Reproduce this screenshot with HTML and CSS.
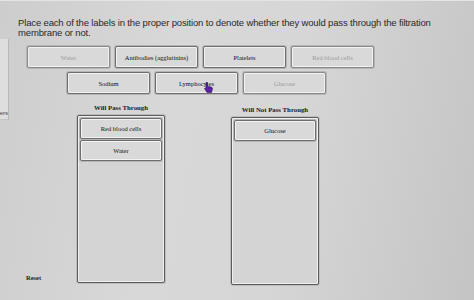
FILE: index.html
```html
<!DOCTYPE html>
<html lang="en">

<head>
    <meta charset="UTF-8">
    <meta name="viewport" content="width=device-width, initial-scale=1.0">
    <title>Filtration Membrane</title>
    <link rel="stylesheet" href="styles.css">
</head>

<body>
    <div class="frame">
        <!-- Side tab, mostly cut off -->
        <div class="side"><span>ers</span></div>

        <div class="content">
            <p class="prompt">Place each of the labels in the proper position to denote whether they would pass through the filtration membrane or not.</p>

            <!-- Label bank -->
            <div class="bank">
                <div class="row row-top">
                    <div class="label used">Water</div>
                    <div class="label">Antibodies (agglutinins)</div>
                    <div class="label">Platelets</div>
                    <div class="label used">Red blood cells</div>
                </div>
                <div class="row row-bottom">
                    <div class="label">Sodium</div>
                    <div class="label cursor-host">Lymphocytes
                        <svg class="cursor" width="9" height="11" viewBox="0 0 9 11">
                            <path d="M2 0.5 L3.5 0.5 L3.5 4.5 L7.5 5 L8.5 6.5 L7.5 10.5 L3 10.5 L0.5 6.5 L2 6 Z" fill="#5a1fa8" stroke="#2b0d5c" stroke-width="0.6"/>
                        </svg>
                    </div>
                    <div class="label used">Glucose</div>
                </div>
            </div>

            <!-- Drop zones -->
            <div class="work">
                <div class="tools">
                    <button class="reset">Reset</button>
                </div>
                <div class="zones">
                    <div class="zone">
                        <h3>Will Pass Through</h3>
                        <div class="drop">
                            <div class="label placed">Red blood cells</div>
                            <div class="label placed">Water</div>
                        </div>
                    </div>
                    <div class="zone zone-right">
                        <h3>Will Not Pass Through</h3>
                        <div class="drop">
                            <div class="label placed">Glucose</div>
                        </div>
                    </div>
                </div>
            </div>
        </div>
    </div>
</body>

</html>
```
FILE: styles.css
```css
/* General styling */
body {
    margin: 0;
    width: 474px;
    height: 300px;
    overflow: hidden;
    font-family: 'Liberation Sans', Arial, sans-serif;
    color: #222;
    background: linear-gradient(100deg, #cdcdcd 0%, #d8d8d8 35%, #d6d6d6 60%, #c4c4c4 100%);
}

.frame {
    display: flex;
    height: 300px;
    border-top: 1px solid #e4e4e4;
    box-sizing: border-box;
}

/* Cut off side tab */
.side {
    width: 8px;
    height: 80px;
    margin-top: 38px;
    background-color: #dedede;
    border-right: 1px solid #b8b8b8;
    border-bottom: 1px solid #c4c4c4;
    display: flex;
    align-items: flex-end;
    justify-content: flex-end;
    overflow: hidden;
}

.side span {
    font-size: 6px;
    color: #444;
    margin-bottom: 3px;
}

.content {
    flex: 1;
    padding: 17px 0 0 9px;
}

.prompt {
    margin: 0;
    width: 440px;
    font-size: 9.5px;
    letter-spacing: -0.15px;
    line-height: 10px;
    color: #2a2a2a;
}

/* Label bank */
.bank {
    margin-top: 8px;
    display: flex;
    flex-direction: column;
    gap: 4px;
}

.row {
    display: flex;
    gap: 5px;
}

.row-top {
    padding-left: 9px;
}

.row-bottom {
    padding-left: 49px;
}

.label {
    width: 83px;
    height: 22px;
    box-sizing: border-box;
    display: flex;
    align-items: center;
    justify-content: center;
    font-family: 'Liberation Serif', 'Times New Roman', serif;
    font-size: 6.5px;
    color: #111;
    background-color: #d9d9d9;
    border: 1px solid #6e6e6e;
    border-radius: 2px;
    box-shadow: inset 0 0 0 1px #f2f2f2, 0 0 0 1px #b5b5b5;
}

.label.used {
    color: #9a9a9a;
    border-color: #8a8a8a;
}

.cursor-host {
    position: relative;
}

.cursor {
    position: absolute;
    left: 48px;
    top: 9px;
}

/* Work area */
.work {
    display: flex;
    margin-top: 11px;
}

.tools {
    width: 59px;
    display: flex;
    align-items: flex-end;
    padding-bottom: 4px;
}

.reset {
    margin-left: 8px;
    padding: 0;
    border: none;
    background: none;
    font-family: 'Liberation Serif', 'Times New Roman', serif;
    font-size: 6.5px;
    font-weight: bold;
    color: #222;
}

.zones {
    display: flex;
    gap: 66px;
}

.zone {
    width: 88px;
    display: flex;
    flex-direction: column;
    align-items: center;
}

.zone-right {
    margin-top: 2px;
}

.zone h3 {
    margin: 0 0 4px;
    font-family: 'Liberation Serif', 'Times New Roman', serif;
    font-size: 6.8px;
    line-height: 6px;
    color: #1a1a1a;
}

.drop {
    width: 88px;
    height: 168px;
    box-sizing: border-box;
    padding: 2px;
    display: flex;
    flex-direction: column;
    gap: 1px;
    border: 1px solid #5c5c5c;
    border-radius: 2px;
    box-shadow: inset 0 0 0 1px #f0f0f0, 0 0 0 1px #bcbcbc;
    background-color: #d4d4d4;
}

.label.placed {
    width: 100%;
    height: 21px;
}
```
